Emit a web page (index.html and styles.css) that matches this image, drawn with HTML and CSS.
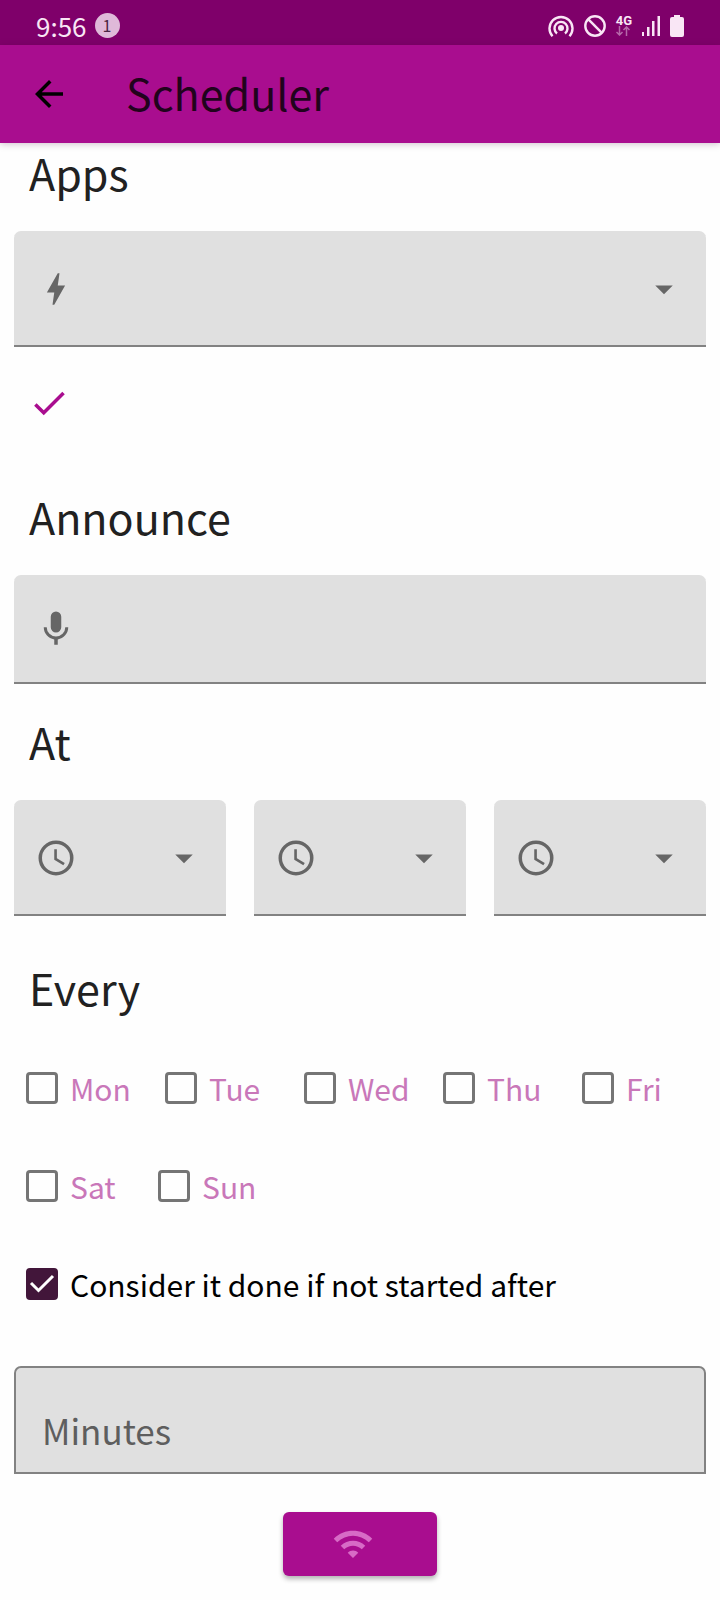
FILE: index.html
```html
<!DOCTYPE html>
<html lang="en">
<head>
<meta charset="utf-8">
<meta name="viewport" content="width=device-width, initial-scale=1">
<title>Scheduler</title>
<link rel="stylesheet" href="styles.css">
</head>
<body>
<svg class="symbols" aria-hidden="true">
  <symbol id="clock" viewBox="0 0 24 24"><circle cx="12" cy="12" r="9" fill="none" stroke="currentColor" stroke-width="2"/><path d="M11 7h1.500v5.200l4.500 2.700-.8 1.200L11 13z"/></symbol>
  <symbol id="caret" viewBox="0 0 24 24"><path d="M7 10l5 5 5-5z"/></symbol>
</svg>
<div class="status">
  <span class="time">9:56</span>
  <span class="count">1</span>
  <div class="tray">
    <svg class="hotspot" viewBox="0 0 26 22"><circle cx="13" cy="13" r="3"/><g fill="none" stroke="currentColor" stroke-width="2.400"><path d="M9 18.500a6.500 6.500 0 1 1 8 0"/><path d="M4.500 21.200a11.500 11.500 0 1 1 17 0"/></g></svg>
    <svg class="block" viewBox="0 0 22 22"><g fill="none" stroke="currentColor" stroke-width="2.400"><circle cx="11" cy="11" r="9.700"/><path d="M4.200 4.200l13.600 13.600"/></g></svg>
    <div class="network"><span>4G</span><svg class="traffic" viewBox="0 0 14 10"><g fill="none" stroke="currentColor" stroke-width="1.500"><path d="M3.500 0v9M.5 6l3 3 3-3M10.500 10V1M7.500 4l3-3 3 3"/></g></svg></div>
    <svg class="signal" viewBox="0 0 18 20"><path d="M0 16h2v4H0zM5 11h2.500v9H5zM10 5h2.500v15H10zM15.500 0H18v20h-2.500z"/></svg>
    <svg class="battery" viewBox="0 0 14 22"><path d="M4 0h6v2h2a2 2 0 0 1 2 2v16a2 2 0 0 1-2 2H2a2 2 0 0 1-2-2V4a2 2 0 0 1 2-2h2z"/></svg>
  </div>
</div>
<header class="appbar">
  <button class="back" type="button" aria-label="Back"><svg class="icon" viewBox="0 0 24 24"><path d="M20 11H7.830l5.590-5.590L12 4l-8 8 8 8 1.410-1.410L7.830 13H20z"/></svg></button>
  <h1 class="title">Scheduler</h1>
</header>
<main class="content">
  <h2 class="heading">Apps</h2>
  <div class="field">
    <svg class="icon" viewBox="0 0 24 24"><path d="M11 21h-1l1-7H6.800L13 3h1l-1 7h4.200z"/></svg>
    <select class="control" aria-label="Apps"><option></option></select>
    <svg class="icon caret"><use href="#caret"/></svg>
  </div>
  <button class="confirm" type="button" aria-label="Confirm apps"><svg class="icon" viewBox="0 0 24 24"><path d="M21 7L9 19l-5.500-5.500 1.410-1.410L9 16.170 19.590 5.590z"/></svg></button>
  <h2 class="heading">Announce</h2>
  <div class="field field-text">
    <svg class="icon" viewBox="0 0 24 24"><path d="M12 2a3 3 0 0 1 3 3v6a3 3 0 0 1-6 0V5a3 3 0 0 1 3-3M19 11c0 3.530-2.610 6.440-6 6.930V21h-2v-3.070c-3.390-.49-6-3.400-6-6.930h1.700a5.300 5.300 0 0 0 10.600 0z"/></svg>
    <input class="control" type="text" aria-label="Announce">
  </div>
  <h2 class="heading">At</h2>
  <div class="times">
    <div class="field"><svg class="icon"><use href="#clock"/></svg><select class="control" aria-label="First time"><option></option></select><svg class="icon caret"><use href="#caret"/></svg></div>
    <div class="field"><svg class="icon"><use href="#clock"/></svg><select class="control" aria-label="Second time"><option></option></select><svg class="icon caret"><use href="#caret"/></svg></div>
    <div class="field"><svg class="icon"><use href="#clock"/></svg><select class="control" aria-label="Third time"><option></option></select><svg class="icon caret"><use href="#caret"/></svg></div>
  </div>
  <h2 class="heading heading-days">Every</h2>
  <div class="days">
    <label class="check day"><input type="checkbox">Mon</label>
    <label class="check day"><input type="checkbox">Tue</label>
    <label class="check day"><input type="checkbox">Wed</label>
    <label class="check day"><input type="checkbox">Thu</label>
    <label class="check day"><input type="checkbox">Fri</label>
  </div>
  <div class="days weekend">
    <label class="check day"><input type="checkbox">Sat</label>
    <label class="check day"><input type="checkbox">Sun</label>
  </div>
  <label class="check"><span class="tick"><input type="checkbox" checked><svg class="mark" viewBox="0 0 32 32"><path d="M5 15l7.500 7.500L27 8" fill="none" stroke="currentColor" stroke-width="3"/></svg></span>Consider it done if not started after</label>
  <input class="minutes" type="text" inputmode="numeric" placeholder="Minutes" aria-label="Minutes">
  <button class="submit" type="button" aria-label="Send over Wi-Fi"><svg class="icon" viewBox="0 0 24 24"><path d="M1 9l2 2c4.970-4.970 13.030-4.970 18 0l2-2C16.930 2.930 7.080 2.930 1 9zm8 8l3 3 3-3c-1.650-1.660-4.340-1.660-6 0zm-4-4l2 2c2.760-2.760 7.240-2.760 10 0l2-2C15.140 9.140 8.870 9.140 5 13z"/></svg></button>
</main>
</body>
</html>
```

FILE: styles.css
```css
* { box-sizing: border-box; }

body {
  margin: 0;
  background: #fefefe;
  color: #212121;
  font-family: "Noto Sans CJK JP", "Noto Sans", sans-serif;
  font-weight: 400;
}

svg { display: block; fill: currentColor; flex: none; }
button { border: 0; padding: 0; background: none; font: inherit; }
.symbols { width: 0; height: 0; position: absolute; }
.icon { width: 42px; height: 42px; }

.status {
  display: flex;
  align-items: center;
  height: 45px;
  padding: 6px 36px 0;
  background: #7f006a;
  color: #f9e6f5;
}
.time { font-size: 26px; line-height: 32px; }
.count {
  width: 25px;
  height: 25px;
  margin-left: 8px;
  border-radius: 50%;
  background: #dfb9d9;
  color: #4a2644;
  font-size: 16px;
  line-height: 25px;
  text-align: center;
}
.tray { display: flex; align-items: center; gap: 10px; margin-left: auto; }
.hotspot { width: 26px; height: 22px; }
.block { width: 22px; height: 22px; }
.network { font: 700 13px/11px Roboto, sans-serif; }
.traffic { width: 14px; height: 10px; color: #b568a9; }
.signal { width: 18px; height: 20px; }
.battery { width: 14px; height: 22px; }

.appbar {
  position: relative;
  display: flex;
  align-items: center;
  height: 98px;
  padding-left: 28px;
  background: #a90d8f;
  color: #21031c;
  box-shadow: 0 1px 7px rgba(60, 0, 50, 0.25);
}
.title,
.heading {
  margin: 0;
  padding-bottom: 4px;
  font-size: 43px;
  line-height: 56px;
  font-weight: 400;
}
.title { margin-left: 56px; }

.content { display: flex; flex-direction: column; padding: 1px 14px 24px; }
.heading { margin-bottom: 27px; padding-left: 15px; }
.heading-days { margin-bottom: 20px; }

.field {
  display: flex;
  align-items: center;
  min-width: 0;
  height: 116px;
  padding: 0 21px;
  border-radius: 7px 7px 0 0;
  background: #e0e0e0;
  box-shadow: inset 0 -2px #828282;
  color: #666;
}
.field-text { height: 109px; margin-bottom: 29px; padding-bottom: 2px; }
.control {
  flex: 1;
  align-self: stretch;
  min-width: 0;
  border: 0;
  background: none;
  appearance: none;
  color: #212121;
  font: inherit;
  font-size: 30px;
}
.confirm { align-self: flex-start; height: 112px; margin-bottom: 29px; padding: 0 14px; color: #a90d8f; }

.times { display: grid; grid-template-columns: repeat(3, 1fr); gap: 28px; margin-bottom: 43px; }

.days { display: flex; }
.check {
  display: flex;
  align-items: center;
  gap: 12px;
  height: 98px;
  padding-left: 12px;
  color: #000;
  font-size: 30px;
}
.day { flex: 0 0 139px; color: #c977b9; }
.weekend .day { flex-basis: 132px; }
.check input {
  flex: none;
  width: 32px;
  height: 32px;
  margin: 0;
  border: 3px solid #757575;
  border-radius: 4px;
  appearance: none;
}
.check input:checked { border-color: #42163a; background: #42163a; }
.tick { display: grid; }
.tick > * { grid-area: 1 / 1; }
.mark { width: 32px; height: 32px; color: #fff; pointer-events: none; }

.minutes {
  width: 100%;
  height: 108px;
  margin: 33px 0 38px;
  padding: 18px 26px 0;
  border: 2px solid #828282;
  border-radius: 7px 7px 0 0;
  background: #e0e0e0;
  color: #212121;
  font: inherit;
  font-size: 35px;
}
.minutes::placeholder { color: #5e5e5e; opacity: 1; }

.submit {
  align-self: center;
  height: 64px;
  padding: 0 63px 0 49px;
  border-radius: 6px;
  background: #a90d8f;
  color: #d76bc6;
  box-shadow: 0 3px 5px rgba(0, 0, 0, 0.3);
}
```
